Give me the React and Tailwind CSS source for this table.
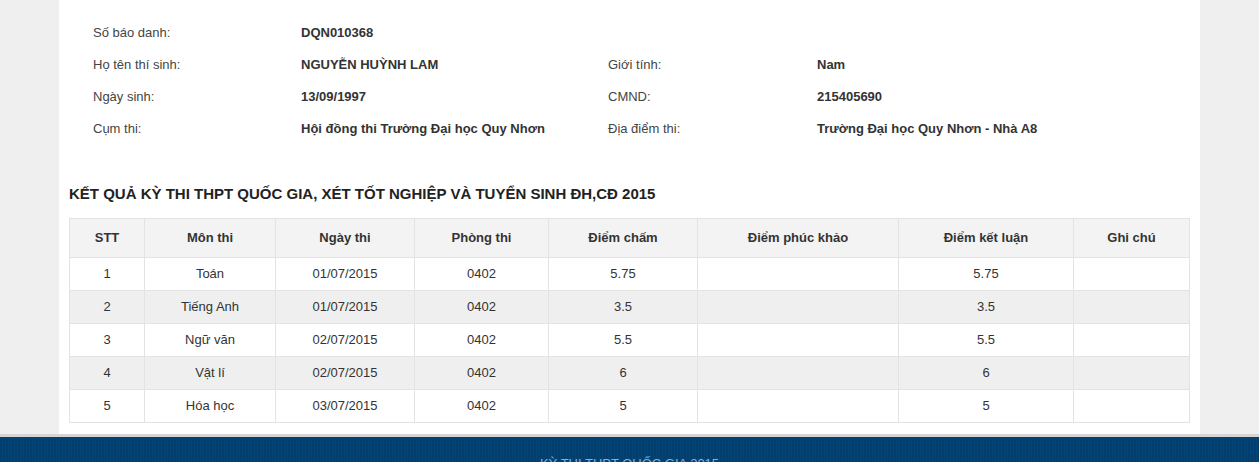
import React from 'react';

const info = [
    ['Số báo danh:', 'DQN010368', null, null],
    ['Họ tên thí sinh:', 'NGUYỄN HUỲNH LAM', 'Giới tính:', 'Nam'],
    ['Ngày sinh:', '13/09/1997', 'CMND:', '215405690'],
    ['Cụm thi:', 'Hội đồng thi Trường Đại học Quy Nhơn', 'Địa điểm thi:', 'Trường Đại học Quy Nhơn - Nhà A8'],
];

const columns = [
    { label: 'STT', w: 'w-[75px]' },
    { label: 'Môn thi', w: 'w-[131px]' },
    { label: 'Ngày thi', w: 'w-[139px]' },
    { label: 'Phòng thi', w: 'w-[134px]' },
    { label: 'Điểm chấm', w: 'w-[149px]' },
    { label: 'Điểm phúc khảo', w: 'w-[201px]' },
    { label: 'Điểm kết luận', w: 'w-[175px]' },
    { label: 'Ghi chú', w: 'w-[116px]' },
];

const results = [
    ['1', 'Toán', '01/07/2015', '0402', '5.75', '', '5.75', ''],
    ['2', 'Tiếng Anh', '01/07/2015', '0402', '3.5', '', '3.5', ''],
    ['3', 'Ngữ văn', '02/07/2015', '0402', '5.5', '', '5.5', ''],
    ['4', 'Vật lí', '02/07/2015', '0402', '6', '', '6', ''],
    ['5', 'Hóa học', '03/07/2015', '0402', '5', '', '5', ''],
];

const App = () => {
    return (
        <div className="bg-[#efefef] h-[462px] overflow-hidden font-['Liberation_Sans',Arial,sans-serif] text-[13px] text-[#333]">
            <div className="w-[1141px] ml-[59px] bg-white px-[10px] pt-[17px] pb-[11px]">
                {/* Thông tin thí sinh */}
                <div className="pl-[24px] grid grid-cols-[208px_307px_209px_1fr]">
                    {info.map((row, i) => (
                        <React.Fragment key={i}>
                            <div className="h-[32px] flex items-center text-[#444]">{row[0]}</div>
                            <div className="h-[32px] flex items-center font-bold">{row[1]}</div>
                            <div className="h-[32px] flex items-center text-[#444]">{row[2]}</div>
                            <div className="h-[32px] flex items-center font-bold">{row[3]}</div>
                        </React.Fragment>
                    ))}
                </div>

                <h2 className="mt-[39px] mb-[14px] leading-[20px] text-[15px] font-bold text-[#222]">
                    KẾT QUẢ KỲ THI THPT QUỐC GIA, XÉT TỐT NGHIỆP VÀ TUYỂN SINH ĐH,CĐ 2015
                </h2>

                <table className="w-[1120px] table-fixed border-collapse">
                    <thead>
                        <tr className="bg-[#f3f3f3]">
                            {columns.map((c) => (
                                <th key={c.label} className={`${c.w} h-[39px] border border-[#e3e3e3] font-bold text-center`}>
                                    {c.label}
                                </th>
                            ))}
                        </tr>
                    </thead>
                    <tbody>
                        {results.map((r, i) => (
                            <tr key={i} className={i % 2 === 1 ? 'bg-[#efefef]' : 'bg-white'}>
                                {r.map((cell, j) => (
                                    <td key={j} className="h-[33px] border border-[#e3e3e3] text-center">
                                        {cell}
                                    </td>
                                ))}
                            </tr>
                        ))}
                    </tbody>
                </table>
            </div>

            <footer className="h-[29px] overflow-hidden border-t-[3px] border-[#d5d5d5] bg-[repeating-linear-gradient(90deg,#023f6f_0px,#023f6f_2px,#044577_2px,#044577_3px)] pt-[20px]">
                <p className="text-center text-[13px] leading-[13px] text-[#86aed6] uppercase">KỲ THI THPT QUỐC GIA 2015</p>
            </footer>
        </div>
    );
};

export default App;
